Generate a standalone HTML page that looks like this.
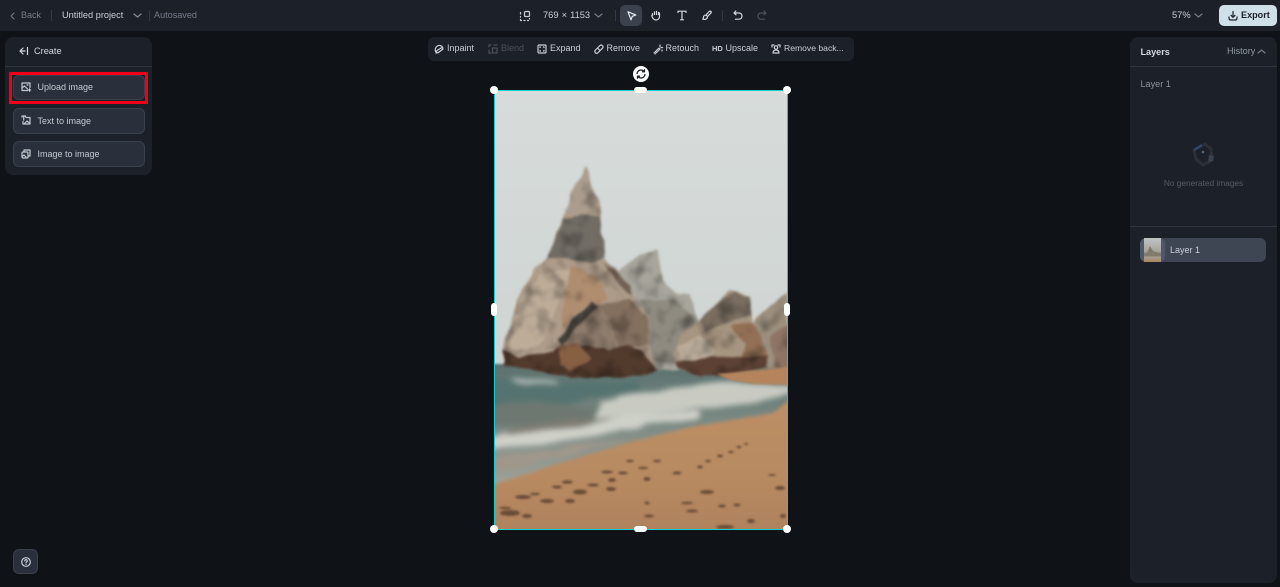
<!DOCTYPE html>
<html><head><meta charset="utf-8"><style>
*{box-sizing:border-box;margin:0;padding:0}
html,body{width:1280px;height:587px;overflow:hidden;background:#0f1217;font-family:"Liberation Sans",sans-serif;color:#c9ced6}
.a{position:absolute;white-space:nowrap}
svg{position:absolute;overflow:visible}
.ic{fill:none;stroke:currentColor;stroke-width:1.2;stroke-linecap:round;stroke-linejoin:round}
.topbar{left:0;top:0;width:1280px;height:31px;background:#1c2029}
.panel{background:#1c2029;border-radius:8px}
.btn{left:13px;width:132px;height:26px;background:#2a303b;border:1px solid #3a414d;border-radius:6px;font-size:9px;line-height:23px;padding-left:23.5px;color:#c3c8d0}
.tool{top:43px;font-size:9px;line-height:11px;color:#c9ced6}
.h{background:#fff;border-radius:50%;width:8px;height:8px}
</style></head><body>
<div class="a topbar"></div>
<svg class="ic" style="left:9px;top:11px;color:#6f7682" width="8" height="10"><path d="M5 2 2 5l3 3"/></svg>
<div class="a" style="left:21px;top:10px;font-size:9px;color:#767d89">Back</div>
<div class="a" style="left:51px;top:10px;width:1px;height:11px;background:#343a45"></div>
<div class="a" style="left:62px;top:10px;font-size:9.2px;color:#c9ced6">Untitled project</div>
<svg class="ic" style="left:133px;top:12px;color:#868d98" width="9" height="7"><path d="M1 2l3.500 3L8 2"/></svg>
<div class="a" style="left:149px;top:10px;width:1px;height:11px;background:#343a45"></div>
<div class="a" style="left:154px;top:10px;font-size:9.1px;color:#767d89">Autosaved</div>

<svg class="ic" style="left:520px;top:11px;color:#c9ced6" width="10" height="10" viewBox="0 0 10 10"><rect x="4.500" y="0.500" width="5" height="5" rx="1"/><path d="M0.500 3v-1.500M0.500 5.500v.5M0.500 8.500v1h1M4 9.500h1M7.500 9.500h1M9.500 7.500v.5" /></svg>
<div class="a" style="left:543px;top:10px;font-size:9.3px;color:#c9ced6;word-spacing:0.5px">769 × 1153</div>
<svg class="ic" style="left:594px;top:12px;color:#767d89" width="9" height="7"><path d="M1 2l3.500 3L8 2"/></svg>
<div class="a" style="left:615px;top:10px;width:1px;height:11px;background:#343a45"></div>
<div class="a" style="left:620px;top:5px;width:22px;height:21px;background:#3b424e;border-radius:5px"></div>
<svg class="ic" style="left:627px;top:11px;color:#e6e9ed" width="10" height="10" viewBox="0 0 10 10"><path d="M1 .8 8.800 4 5.300 5.300 4 8.800z"/></svg>
<svg class="ic" style="left:651px;top:10px;color:#d5d8dd" width="10" height="11" viewBox="0 0 10 11"><path d="M1.500 5.500V3.500M3.500 4.500V1.800M5.500 4.500V1.300M7.500 4.500V2.300M1.500 4.500C.5 5 .8 6.500 1.500 7.500 2.500 9.500 3.500 10 5 10c2 0 3.500-1.500 3.500-3.500V3"/></svg>
<svg class="ic" style="left:677px;top:10px;color:#d5d8dd" width="10" height="11" viewBox="0 0 10 11"><path d="M1 2.500V1.200H9V2.500M5 1.200V9.800M3.500 9.800h3"/></svg>
<svg class="ic" style="left:702px;top:10px;color:#d5d8dd" width="10" height="11" viewBox="0 0 10 11"><path d="M9 1.500c-.7-.6-1.400-.5-2 .1L4 5l1.500 1.500L8.800 3.200c.6-.6.700-1.100.2-1.700zM4 5C2.500 5 1.500 6 1.500 7.200c0 .9-.2 1.400-.7 1.900 2 .8 4.700.2 4.700-2.600"/></svg>
<div class="a" style="left:722px;top:10px;width:1px;height:11px;background:#343a45"></div>
<svg class="ic" style="left:733px;top:10px;color:#d5d8dd" width="10" height="11" viewBox="0 0 10 11"><path d="M2.800 1 1 3l2 1.800M1 3h5c2 0 3 1.400 3 3s-1 3.200-3 3.200H2.500"/></svg>
<svg class="ic" style="left:757px;top:10px;color:#4b515c" width="10" height="11" viewBox="0 0 10 11"><path d="M7.200 1 9 3 7 4.800M9 3H4C2 3 1 4.400 1 6s1 3.200 3 3.200h3.500"/></svg>
<div class="a" style="left:1172px;top:10px;font-size:9.300px;color:#c9ced6">57%</div>
<svg class="ic" style="left:1194px;top:12px;color:#767d89" width="9" height="7"><path d="M1 2l3.500 3L8 2"/></svg>
<div class="a" style="left:1219px;top:5px;width:58px;height:21px;background:#cfe0e8;border-radius:5px"></div>
<svg class="ic" style="left:1228px;top:11px;color:#1c2029" width="10" height="10" viewBox="0 0 10 10"><path d="M5 .5v5.500M3 4.300 5 6.300 7 4.300M1 6v1c0 1 .5 2 1.500 2h5c1 0 1.500-1 1.500-2V6"/></svg>
<div class="a" style="left:1241px;top:10px;font-size:9.100px;font-weight:700;color:#1c2029">Export</div>

<div class="a panel" style="left:5px;top:37px;width:147px;height:138px"></div>
<div class="a" style="left:5px;top:66px;width:147px;height:1px;background:#2f3540"></div>
<svg class="ic" style="left:19px;top:46px;color:#d5d8dd" width="10" height="10" viewBox="0 0 10 10"><path d="M4 2 1 5l3 3M1 5h5M8.500 1.500v7"/></svg>
<div class="a" style="left:34px;top:46px;font-size:9.200px;color:#d5d8dd">Create</div>
<div class="a btn" style="top:75px;height:25px">Upload image</div>
<div class="a" style="left:9px;top:72px;width:139px;height:31.500px;border:3px solid #f00018"></div>
<div class="a btn" style="top:108px;line-height:24px">Text to image</div>
<div class="a btn" style="top:141px;line-height:24px">Image to image</div>
<svg class="ic" style="left:21px;top:82px;color:#c3c8d0" width="10" height="10" viewBox="0 0 10 10"><path d="M6.500 8.500H1V1h8v4.500M1 6l2.500-2 3 3M6 3h1M8.500 6.800v2.500M7.300 8h2.400"/></svg>
<svg class="ic" style="left:21px;top:115px;color:#c3c8d0" width="10" height="10" viewBox="0 0 10 10"><path d="M1 2V1h3.500V2M2.700 1v4M5.500 2.500H9V9H2V6.500M3.500 8.500 6 6 9 8.500"/></svg>
<svg class="ic" style="left:21px;top:149px;color:#c3c8d0" width="10" height="10" viewBox="0 0 10 10"><rect x="1" y="3" width="6" height="6" rx="1"/><path d="M3 3V1h6v6H7M1 7.500 3 6l2 2"/></svg>
<div class="a" style="left:13px;top:549px;width:25px;height:25px;background:#2a303b;border:1px solid #3a414d;border-radius:6px"></div>
<svg class="ic" style="left:21px;top:557px;color:#c9ced6" width="10" height="10" viewBox="0 0 10 10"><circle cx="5" cy="5" r="4.300"/><path d="M3.700 3.900C3.800 3 4.400 2.700 5 2.700c.8 0 1.300.5 1.300 1.200S5 5 5 5.900M5 7.300v.1"/></svg>

<div class="a" style="left:428px;top:37px;width:426px;height:24px;background:#1c2029;border-radius:6px"></div>
<svg class="ic" style="left:434px;top:44px;color:#c9ced6" width="10" height="10" viewBox="0 0 10 10"><path d="M1.500 7.500C.5 4 3 1 6 1.500c2 .3 3 2 3 3.500M2 9l1-2.500 5-3 1 1.500-4.500 3.500z"/></svg>
<div class="a tool" style="left:447px">Inpaint</div>
<svg class="ic" style="left:488px;top:44px;color:#4b515c" width="10" height="10" viewBox="0 0 10 10"><path d="M1 3V1h2M1 6v3h2M6 1h3v0M4.500 4h4.500v5H4.500z"/></svg>
<div class="a tool" style="left:501px;color:#4b515c">Blend</div>
<svg class="ic" style="left:537px;top:43.500px;color:#c9ced6" width="10" height="10" viewBox="0 0 10 10"><rect x="1" y="1" width="8" height="8" rx="1"/><path d="M3 3.500V3h.5M7 3.500V3h-.5M3 6.500V7h.5M7 6.500V7h-.5"/></svg>
<div class="a tool" style="left:550px">Expand</div>
<svg class="ic" style="left:594px;top:44px;color:#c9ced6" width="10" height="10" viewBox="0 0 10 10"><path d="M1 6.500 6 1.500c.7-.6 1.500-.6 2.200 0l.4.400c.6.700.6 1.500 0 2.200L3.700 9c-.7.500-1.500.5-2.100-.1C1 8.300.5 7.300 1 6.500zM3.500 4 6 6.500"/></svg>
<div class="a tool" style="left:606.500px">Remove</div>
<svg class="ic" style="left:653px;top:44px;color:#c9ced6" width="10" height="10" viewBox="0 0 10 10"><path d="M1 9 6 4l1 1-5 5M7 1v1.500M9.500 3.500H8M9 6v1"/></svg>
<div class="a tool" style="left:665.500px">Retouch</div>
<div class="a tool" style="left:712px;top:44px;font-size:7.500px;font-weight:700;line-height:10px">HD</div>
<div class="a tool" style="left:725.500px">Upscale</div>
<svg class="ic" style="left:771px;top:44px;color:#c9ced6" width="10" height="10" viewBox="0 0 10 10"><circle cx="5" cy="3.500" r="1.700"/><path d="M2 9c0-2 1.300-3 3-3s3 1 3 3zM1 3V1h2M9 3V1H7"/></svg>
<div class="a tool" style="left:784px;font-size:8.600px">Remove back...</div>

<div class="a" style="left:633px;top:66px;width:16px;height:16px;border-radius:50%;background:#fff"></div>
<svg class="ic" style="left:636px;top:69px;color:#1c2029;stroke-width:1.300" width="10" height="10" viewBox="0 0 10 10"><path d="M1 4.500C1.300 2.500 3 1 5 1c1.300 0 2.400.6 3.100 1.600M9 5.500C8.700 7.500 7 9 5 9c-1.300 0-2.400-.6-3.100-1.600M8.500 .8v2H6.500M1.500 9.200v-2h2"/></svg>

<svg style="left:495px;top:90px;overflow:hidden" width="292" height="439" viewBox="495 90 292 439">
<defs>
<filter id="rock" filterUnits="userSpaceOnUse" x="470" y="140" width="340" height="260" color-interpolation-filters="sRGB">
<feTurbulence type="fractalNoise" baseFrequency=".05" numOctaves="2" seed="4" result="n"/>
<feDisplacementMap in="SourceGraphic" in2="n" scale="6" xChannelSelector="R" yChannelSelector="G" result="d"/>
<feTurbulence type="fractalNoise" baseFrequency=".06" numOctaves="2" seed="9" result="t"/>
<feColorMatrix in="t" type="matrix" values=".9 0 0 0 .52 .9 0 0 0 .52 .9 0 0 0 .52 0 0 0 0 1" result="g"/>
<feBlend in="d" in2="g" mode="multiply" result="m"/>
<feComposite in="m" in2="d" operator="in" result="c"/>
<feGaussianBlur in="c" stdDeviation="1.300"/>
</filter>
<filter id="wave" filterUnits="userSpaceOnUse" x="440" y="340" width="400" height="220" color-interpolation-filters="sRGB">
<feTurbulence type="fractalNoise" baseFrequency=".02 .07" numOctaves="2" seed="7" result="n"/>
<feDisplacementMap in="SourceGraphic" in2="n" scale="10" xChannelSelector="R" yChannelSelector="G" result="d"/>
<feGaussianBlur in="d" stdDeviation="2.800"/>
</filter>
<filter id="b1" filterUnits="userSpaceOnUse" x="440" y="340" width="400" height="220"><feGaussianBlur stdDeviation="1"/></filter>
<filter id="b3" filterUnits="userSpaceOnUse" x="440" y="340" width="400" height="220"><feGaussianBlur stdDeviation="1.800"/></filter>
<linearGradient id="sand" x1="0" y1="0" x2="0" y2="1"><stop offset="0" stop-color="#bd8f66"/><stop offset=".5" stop-color="#b88a62"/><stop offset="1" stop-color="#a87e59"/></linearGradient>
<linearGradient id="sky" x1="0" y1="0" x2="0" y2="1"><stop offset="0" stop-color="#d7dcda"/><stop offset="1" stop-color="#ced4d2"/></linearGradient>
<linearGradient id="water" x1="0" y1="0" x2="0" y2="1"><stop offset="0" stop-color="#5b716e"/><stop offset=".4" stop-color="#7a8983"/><stop offset="1" stop-color="#a9aaa1"/></linearGradient>
</defs>
<rect x="495" y="90" width="292" height="300" fill="url(#sky)"/>
<rect x="440" y="364" width="400" height="140" fill="url(#water)" filter="url(#b1)"/>
<g filter="url(#rock)">
<path d="M618 270 640 255 657 248 663 280 676 294 690 295 698 320 700 370 640 370 625 300z" fill="#a8a69c"/>
<path d="M640 300 675 300 692 315 698 330 680 365 650 360z" fill="#8f8b80"/>
<path d="M753 320 770 305 787 293V370H765z" fill="#9c8f7d"/>
<path d="M770 335 795 320V368H775z" fill="#8d7565"/>
<path d="M673 353 683 330 700 320 713 307 730 291 749 296 752 320 767 353 767 368 735 374 700 376 677 366z" fill="#a69580"/>
<path d="M700 320 713 307 735 293 749 297 751 315 725 323 705 332z" fill="#7a6e60"/>
<path d="M677 345 700 335 715 350 710 362 680 360z" fill="#b9ab98"/>
<path d="M730 325 752 322 767 350 767 368 735 372 745 345z" fill="#926f55"/>
<path d="M675 362 710 358 767 355 767 368 735 375 700 377 678 368z" fill="#5d4134"/>
<path d="M586 167 589 178 594 191 600 202 601 225 605 258 630 285 633 297 647 317 648 343 657 370 627 376 557 374 503 363 505 337 517 300 533 270 547 258 558 230 565 212 573 192z" fill="#ae9c8a"/>
<path d="M586 167 589 178 594 191 600 202 592 212 575 212 565 212 573 192z" fill="#ab9d8e"/>
<path d="M563 220 580 214 600 216 605 258 590 263 565 258 547 258z" fill="#716c64"/>
<path d="M605 262 630 285 632 297 615 280z" fill="#706155"/>
<path d="M510 340 520 300 540 275 570 270 560 300 545 340 530 350 510 350z" fill="#bdac98"/>
<path d="M570 265 600 280 610 300 585 305 560 330z" fill="#af8d6f"/>
<path d="M560 335 590 305 600 303 615 340 625 370 565 375z" fill="#8d7b6b"/>
<path d="M600 303 630 300 647 320 648 345 620 350z" fill="#84705f"/>
<path d="M562 345 585 318 598 305 590 302 570 322 558 340z" fill="#47413b"/>
<path d="M503 350 520 358 555 350 565 345 580 345 610 350 625 345 640 350 657 370 627 378 570 378 503 366z" fill="#523a2d"/>
<path d="M560 346 578 342 590 360 570 372 560 365z" fill="#875f43"/>
</g>
<g filter="url(#wave)">
<path d="M440 374 560 380 600 382 640 380 640 392 590 398 540 408 440 410z" fill="#557370"/>
<path d="M510 378 555 378 560 383 520 384z" fill="#b4bcb7"/>
<path d="M490 405 560 402 600 408 590 420 540 425 490 425z" fill="#6d7871"/>
<path d="M600 402 640 394 690 386 720 380 800 386 800 394 740 404 690 410 640 416 595 420z" fill="#c9cbc3"/>
<path d="M440 442 560 428 620 418 700 410 700 418 620 430 560 442 440 458z" fill="#cfd1c9"/>
<path d="M510 428 570 416 612 418 570 426 510 436z" fill="#7f7c72"/>
<path d="M440 466 600 442 640 438 600 448 440 486z" fill="#a0978a"/>
</g>
<path d="M717 374 800 366V385L755 384 730 380z" fill="#b5845c" filter="url(#b1)"/>
<path d="M440 500 495 484 557 464 623 444 690 427 773 413 800 392V560H440z" fill="url(#sand)" filter="url(#b3)"/>
<g fill="#5e432f" filter="url(#b1)" opacity=".85">
<ellipse cx="547" cy="501" rx="7" ry="2"/><ellipse cx="570" cy="501" rx="5" ry="2"/><ellipse cx="580" cy="492" rx="7" ry="2.500"/><ellipse cx="510" cy="513" rx="10" ry="3"/><ellipse cx="527" cy="516" rx="5" ry="2"/><ellipse cx="523" cy="497" rx="8" ry="2"/><ellipse cx="567" cy="482" rx="5" ry="1.800"/><ellipse cx="612" cy="480" rx="4" ry="2"/><ellipse cx="623" cy="473" rx="5" ry="1.500"/><ellipse cx="607" cy="472" rx="6" ry="1.500"/><ellipse cx="647" cy="479" rx="3.500" ry="2"/><ellipse cx="611" cy="489" rx="5" ry="2"/><ellipse cx="677" cy="473" rx="4.500" ry="1.500"/><ellipse cx="700" cy="467" rx="3" ry="1.500"/><ellipse cx="708" cy="461" rx="3" ry="1.300"/><ellipse cx="720" cy="456" rx="3" ry="1.500"/><ellipse cx="731" cy="452" rx="3" ry="1.300"/><ellipse cx="739" cy="447" rx="2.500" ry="1.200"/><ellipse cx="746" cy="444" rx="2" ry="1"/><ellipse cx="707" cy="492" rx="7" ry="2"/><ellipse cx="687" cy="503" rx="6" ry="1.300"/><ellipse cx="692" cy="511" rx="6" ry="1.500"/><ellipse cx="722" cy="506" rx="4" ry="1.500"/><ellipse cx="737" cy="505" rx="3.500" ry="1.500"/><ellipse cx="751" cy="521" rx="4" ry="2"/><ellipse cx="725" cy="527" rx="9" ry="2"/><ellipse cx="783" cy="516" rx="3" ry="2"/><ellipse cx="780" cy="488" rx="5" ry="2"/><ellipse cx="772" cy="475" rx="4" ry="1"/><ellipse cx="647" cy="503" rx="2.500" ry="1.500"/><ellipse cx="649" cy="516" rx="5" ry="1.500"/><ellipse cx="570" cy="482" rx="3" ry="1.200"/><ellipse cx="643" cy="468" rx="5" ry="1.300"/><ellipse cx="630" cy="461" rx="4" ry="1.300"/><ellipse cx="657" cy="461" rx="4" ry="1.300"/><ellipse cx="557" cy="487" rx="5" ry="1.500"/><ellipse cx="593" cy="485" rx="6" ry="1.500"/><ellipse cx="505" cy="508" rx="6" ry="1.300"/><ellipse cx="535" cy="494" rx="5" ry="1.300"/></g>
</svg>
<div class="a" style="left:494px;top:90px;width:294px;height:439.500px;border:1.500px solid #13d0d0"></div>
<div class="a h" style="left:490px;top:86px"></div><div class="a h" style="left:783px;top:86px"></div>
<div class="a h" style="left:490px;top:525px"></div><div class="a h" style="left:783px;top:525px"></div>
<div class="a" style="left:634px;top:87px;width:13px;height:6px;background:#fff;border-radius:3px"></div>
<div class="a" style="left:634px;top:526px;width:13px;height:6px;background:#fff;border-radius:3px"></div>
<div class="a" style="left:491px;top:303px;width:6px;height:13px;background:#fff;border-radius:3px"></div>
<div class="a" style="left:784px;top:303px;width:6px;height:13px;background:#fff;border-radius:3px"></div>

<div class="a panel" style="left:1130px;top:37px;width:147px;height:546px"></div>
<div class="a" style="left:1130px;top:66px;width:147px;height:1px;background:#2f3540"></div>
<div class="a" style="left:1130px;top:226px;width:147px;height:1px;background:#2f3540"></div>
<div class="a" style="left:1140.500px;top:47px;font-size:9.100px;font-weight:700;color:#d5d8dd">Layers</div>
<div class="a" style="left:1227px;top:46px;font-size:9.100px;color:#9299a4">History</div>
<svg class="ic" style="left:1257px;top:48px;color:#767d89" width="9" height="7"><path d="M1 5l3.500-3L8 5"/></svg>
<div class="a" style="left:1140.500px;top:79px;font-size:9.100px;color:#8c939e">Layer 1</div>
<svg style="left:1192px;top:142px" width="26" height="24" viewBox="0 0 26 24"><path d="M2 8 13 2l6 5 1 11-9 5L4 17z" fill="none" stroke="#2a2f39" stroke-width="3"/><path d="M2 8 10 3" stroke="#2f4a6b" stroke-width="2" fill="none"/><circle cx="11" cy="10" r="1.300" fill="#4f6780"/><path d="M17 13l5 1-1 5-5 1z" fill="#39424f"/></svg>
<div class="a" style="left:1130px;width:147px;text-align:center;top:178px;font-size:8.300px;color:#565c67">No generated images</div>
<div class="a" style="left:1140px;top:238px;width:126px;height:24px;background:#3f4653;border-radius:6px"></div>
<div class="a" style="left:1140px;top:238px;width:25px;height:24px;background:#4f5868;border-radius:6px"></div>
<svg style="left:1144px;top:238px;overflow:hidden" width="17" height="24"><defs><linearGradient id="t" x1="0" y1="0" x2="0" y2="1"><stop offset="0" stop-color="#bfc5c4"/><stop offset=".55" stop-color="#a7a49b"/><stop offset=".7" stop-color="#6e746f"/><stop offset=".8" stop-color="#a59d8f"/><stop offset="1" stop-color="#ac8461"/></linearGradient></defs><rect width="17" height="24" fill="url(#t)"/><path d="M2 17 6 8l3 5 6 2v3H2z" fill="#837a6e"/></svg>
<div class="a" style="left:1170px;top:244.500px;font-size:9px;color:#c9ced6">Layer 1</div>
</body></html>
